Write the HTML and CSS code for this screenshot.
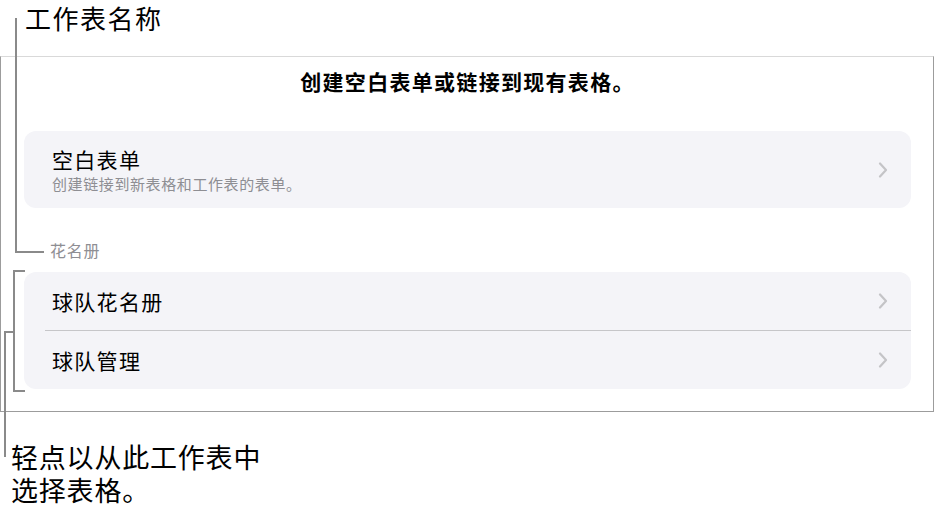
FILE: index.html
```html
<!DOCTYPE html>
<html lang="zh-CN">
<head>
<meta charset="utf-8">
<title>工作表名称</title>
<link rel="stylesheet" href="styles.css">
</head>
<body>
<div class="page">
  <div class="callout-top">工作表名称</div>
  <section class="panel">
    <h1 class="panel-title">创建空白表单或链接到现有表格。</h1>
    <div class="card card-single">
      <div class="row row-tall">
        <div class="row-text">
          <div class="row-title">空白表单</div>
          <div class="row-sub">创建链接到新表格和工作表的表单。</div>
        </div>
        <svg class="chev" viewBox="0 0 10 16" width="10" height="16"><path d="M2 1.5 L8 8 L2 14.5" fill="none" stroke="#c4c4c7" stroke-width="2.2" stroke-linecap="round" stroke-linejoin="round"/></svg>
      </div>
    </div>
    <div class="section-label">花名册</div>
    <div class="card">
      <div class="row">
        <div class="row-title">球队花名册</div>
        <svg class="chev" viewBox="0 0 10 16" width="10" height="16"><path d="M2 1.5 L8 8 L2 14.5" fill="none" stroke="#c4c4c7" stroke-width="2.2" stroke-linecap="round" stroke-linejoin="round"/></svg>
      </div>
      <div class="sep"></div>
      <div class="row">
        <div class="row-title">球队管理</div>
        <svg class="chev" viewBox="0 0 10 16" width="10" height="16"><path d="M2 1.5 L8 8 L2 14.5" fill="none" stroke="#c4c4c7" stroke-width="2.2" stroke-linecap="round" stroke-linejoin="round"/></svg>
      </div>
    </div>
  </section>
  <div class="callout-bottom">
    <div class="callout-line">轻点以从此工作表中</div>
    <div class="callout-line">选择表格。</div>
  </div>
  <svg class="leaders" width="935" height="513" viewBox="0 0 935 513">
    <path d="M16 18 V252 H44" fill="none" stroke="#8a8a8a" stroke-width="2"/>
    <path d="M25 271 H14 V391 H25" fill="none" stroke="#8a8a8a" stroke-width="2"/>
    <path d="M14 332 H5 V457" fill="none" stroke="#8a8a8a" stroke-width="2"/>
  </svg>
</div>
</body>
</html>
```
FILE: styles.css
```css
html, body {
  margin: 0;
  padding: 0;
  background: #ffffff;
}
body {
  font-family: "Noto Sans CJK SC", "Noto Sans", sans-serif;
  color: #000000;
}
.page {
  position: relative;
  width: 935px;
  height: 513px;
  overflow: hidden;
}
.callout-top {
  height: 56px;
  box-sizing: border-box;
  padding-left: 25px;
  font-size: 26px;
  letter-spacing: 1.5px;
  line-height: 36px;
}
.panel {
  width: 934px;
  box-sizing: border-box;
  border-top: 1px solid #d9d9d9;
  border-left: 1px solid #9c9c9c;
  border-right: 1px solid #9c9c9c;
  border-bottom: 1px solid #9c9c9c;
  padding: 9px 22px 22px 23px;
}
.panel-title {
  margin: 0 0 35px 0;
  text-align: center;
  font-size: 21px;
  letter-spacing: 1.3px;
  font-weight: 700;
  line-height: 30px;
}
.card {
  background: #f4f4f8;
  border-radius: 12px;
}
.card-single {
  height: 77px;
}
.row {
  height: 58px;
  display: flex;
  align-items: center;
  justify-content: space-between;
  padding: 0 23px 0 28px;
}
.row-tall {
  height: 77px;
}
.row-text {
  display: flex;
  flex-direction: column;
  padding-top: 1px;
}
.row-title {
  font-size: 21px;
  letter-spacing: 1.3px;
  line-height: 28px;
}
.row-sub {
  font-size: 15px;
  letter-spacing: 0.6px;
  line-height: 22px;
  color: #8e8e93;
}
.chev {
  display: block;
}
.sep {
  height: 1px;
  background: #c6c6c9;
  margin-left: 21px;
}
.section-label {
  height: 64px;
  box-sizing: border-box;
  padding: 32px 0 0 26px;
  font-size: 16px;
  letter-spacing: 0.7px;
  line-height: 20px;
  color: #8e8e93;
}
.callout-bottom {
  margin-top: 28px;
  padding-left: 11px;
  font-size: 27px;
  letter-spacing: 0.8px;
}
.callout-line {
  height: 33px;
  line-height: 33px;
}
.leaders {
  position: absolute;
  left: 0;
  top: 0;
  pointer-events: none;
}
```
